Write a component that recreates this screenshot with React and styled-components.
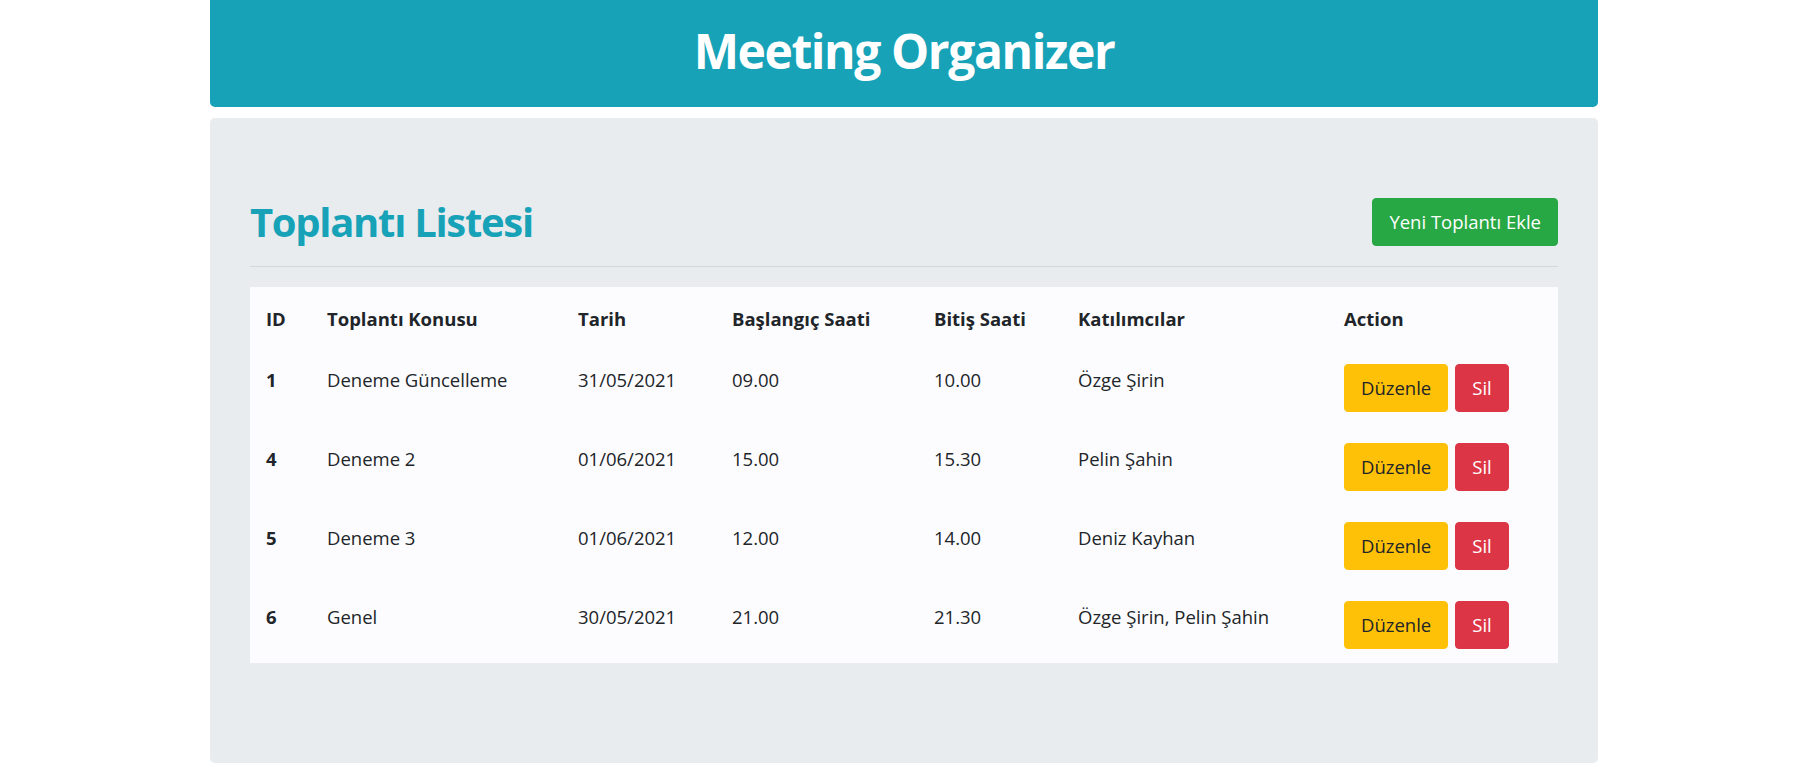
import React from 'react'
import styled, {createGlobalStyle} from 'styled-components'

const GlobalStyle = createGlobalStyle`
  body {
    margin: 0;
    background: #fff;
    font-family: "Open Sans", "Noto Sans", sans-serif;
    color: #212529;
  }
`;

const Page = styled.div`
  width: 1388px;
  margin: 0 auto;
`;

const Header = styled.header`
  height: 107px;
  box-sizing: border-box;
  padding-bottom: 6px;
  background-color: #17a2b8;
  border-radius: 0 0 5px 5px;
  display: flex;
  align-items: center;
  justify-content: center;
`;

const HeaderTitle = styled.h1`
  margin: 0;
  color: #fff;
  font-size: 48px;
  line-height: 1.2;
  font-weight: 700;
  letter-spacing: -1.4px;
`;

const Jumbotron = styled.section`
  margin-top: 11px;
  height: 645px;
  box-sizing: border-box;
  background-color: #e9ecef;
  border-radius: 5px;
  padding: 80px 40px 0;
`;

const TitleRow = styled.div`
  display: flex;
  align-items: center;
  justify-content: space-between;
  padding-bottom: 20px;
  border-bottom: 1px solid #d3d8dd;
  margin-bottom: 20px;
`;

const ListTitle = styled.h2`
  margin: 0;
  color: #17a2b8;
  font-size: 40px;
  line-height: 48px;
  font-weight: 700;
  letter-spacing: -1.3px;
`;

const Button = styled.button`
  font-family: inherit;
  font-size: 18.5px;
  height: 48px;
  line-height: 28px;
  padding: 0 16px;
  border: 1px solid ${(props) => props.bg};
  background-color: ${(props) => props.bg};
  color: ${(props) => props.dark ? '#212529' : '#fff'};
  border-radius: 4px;
  cursor: pointer;
`;

const Table = styled.table`
  width: 100%;
  table-layout: fixed;
  border-collapse: collapse;
  background-color: #fcfcfe;
  font-size: 18.5px;
`;

const Th = styled.th`
  text-align: left;
  font-weight: 700;
  padding: 18px 16px 14px;
  line-height: 28px;
`;

const Td = styled.td`
  padding: 17px 16px 14px;
  line-height: 31px;
  vertical-align: top;
  font-weight: ${(props) => props.bold ? 700 : 400};
`;

const Actions = styled.div`
  display: flex;
  gap: 7px;
`;

const colWidths = [61, 251, 154, 202, 144, 266, 230];
const headings = ['ID', 'Toplantı Konusu', 'Tarih', 'Başlangıç Saati', 'Bitiş Saati', 'Katılımcılar', 'Action'];

const meetings = [
    {id: 1, topic: 'Deneme Güncelleme', date: '31/05/2021', start: '09.00', end: '10.00', people: 'Özge Şirin'},
    {id: 4, topic: 'Deneme 2', date: '01/06/2021', start: '15.00', end: '15.30', people: 'Pelin Şahin'},
    {id: 5, topic: 'Deneme 3', date: '01/06/2021', start: '12.00', end: '14.00', people: 'Deniz Kayhan'},
    {id: 6, topic: 'Genel', date: '30/05/2021', start: '21.00', end: '21.30', people: 'Özge Şirin, Pelin Şahin'},
];

const App = () => {
    return (
        <Page>
            <GlobalStyle/>
            <Header>
                <HeaderTitle>Meeting Organizer</HeaderTitle>
            </Header>
            <Jumbotron>
                <TitleRow>
                    <ListTitle>Toplantı Listesi</ListTitle>
                    <Button bg="#28a745">Yeni Toplantı Ekle</Button>
                </TitleRow>
                <Table>
                    <colgroup>
                        {colWidths.map((w, i) => <col key={i} style={{width: w}}/>)}
                    </colgroup>
                    <thead>
                        <tr>
                            {headings.map((h) => <Th key={h}>{h}</Th>)}
                        </tr>
                    </thead>
                    <tbody>
                        {meetings.map((m) => (
                            <tr key={m.id}>
                                <Td bold>{m.id}</Td>
                                <Td>{m.topic}</Td>
                                <Td>{m.date}</Td>
                                <Td>{m.start}</Td>
                                <Td>{m.end}</Td>
                                <Td>{m.people}</Td>
                                <Td>
                                    <Actions>
                                        <Button dark bg="#ffc107">Düzenle</Button>
                                        <Button bg="#dc3545">Sil</Button>
                                    </Actions>
                                </Td>
                            </tr>
                        ))}
                    </tbody>
                </Table>
            </Jumbotron>
        </Page>
    );
};

export default App
